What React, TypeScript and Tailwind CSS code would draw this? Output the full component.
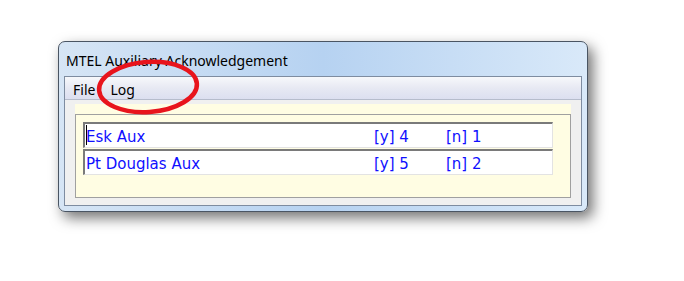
const rows = [
  { name: 'Esk Aux', yes: 4, no: 1, focused: true },
  { name: 'Pt Douglas Aux', yes: 5, no: 2, focused: false },
];

function Row({ name, yes, no, focused }: { name: string; yes: number; no: number; focused: boolean }) {
  return (
    <div className="relative flex h-[26px] items-center border-t-2 border-l-2 border-t-[#7a7a7a] border-l-[#7a7a7a] border-r border-b border-r-[#e3e3e3] border-b-[#e3e3e3] bg-white pt-[3px] text-[15px] text-[#1010ff] [font-family:'DejaVu_Sans',sans-serif]">
      {focused && <span className="absolute left-[1px] top-[1px] h-[20px] w-px bg-black" />}
      <span className="w-[289px] pl-[1px]">{name}</span>
      <span className="w-[72px]">[y] {yes}</span>
      <span>[n] {no}</span>
    </div>
  );
}

export default function App() {
  return (
    <div className="relative h-[281px] w-[684px] overflow-hidden bg-white pl-[58px] pt-[41px]">
      <div className="flex h-[171px] w-[530px] flex-col rounded-[7px] border border-[#4a5563] bg-gradient-to-r from-[#d6e5f5] via-[#b6d2f1] to-[#d9e9f9] px-[5px] pb-[5px] shadow-[5px_6px_14px_rgba(0,0,0,0.55)]">
        <div className="flex h-[34px] items-center pl-[2px] pt-[2px] text-[14px] text-black [font-family:'Noto_Sans',sans-serif]">
          MTEL Auxiliary Acknowledgement
        </div>
        <div className="flex flex-1 flex-col border border-[#7e8ca0] bg-[#f0f0f0]">
          <div className="flex h-[23px] items-center gap-[15px] border-b border-[#b6bccc] bg-gradient-to-b from-[#f7f8fb] via-[#e7e9f3] to-[#dcdff0] pl-[8px] pt-[3px] text-[14px] text-black [font-family:'Noto_Sans',sans-serif]">
            <span>File</span>
            <span>Log</span>
          </div>
          <div className="mx-[10px] mb-[7px] mt-[4px] flex flex-1 flex-col bg-[#fffde3] pt-[10px]">
            <div className="flex flex-1 flex-col gap-px border border-[#a0a0a0] pl-[7px] pr-[17px] pt-[7px]">
              {rows.map((r) => (
                <Row key={r.name} {...r} />
              ))}
            </div>
          </div>
        </div>
      </div>
      <svg className="pointer-events-none absolute left-[94px] top-[56px]" width="108" height="62" viewBox="0 0 108 62">
        <ellipse cx="54" cy="31" rx="49" ry="25" fill="none" stroke="#e8141c" strokeWidth="4.5" transform="rotate(-4 54 31)" />
      </svg>
    </div>
  );
}
